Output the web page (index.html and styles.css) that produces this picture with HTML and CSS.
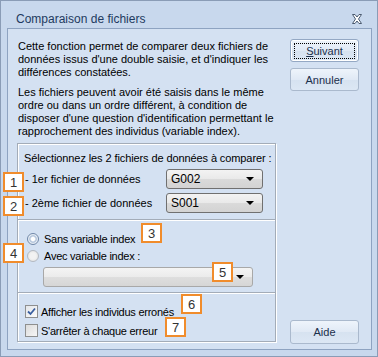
FILE: index.html
```html
<!DOCTYPE html>
<html>
<head>
<meta charset="utf-8">
<link rel="stylesheet" href="styles.css">
</head>
<body>
<div class="window">
  <div class="titlebar">
    <span class="title">Comparaison de fichiers</span>
    <svg class="close" width="12" height="10" viewBox="0 0 12 10">
      <path d="M1.5 0.5 H4 L6 3 L8 0.5 H10.5 L7.5 5 L10.5 9.5 H8 L6 7 L4 9.5 H1.5 L4.5 5 Z" fill="#fff" stroke="#4a5a70" stroke-width="1"/>
    </svg>
  </div>
  <div class="client">
    <div class="leftcol">
      <p class="para">Cette fonction permet de comparer deux fichiers de données issus d'une double saisie, et d'indiquer les différences constatées.</p>
      <p class="para p2">Les fichiers peuvent avoir été saisis dans le même ordre ou dans un ordre différent, à condition de disposer d'une question d'identification permettant le rapprochement des individus (variable index).</p>
      <div class="group">
        <div class="sec sec1">
          <div class="heading">Sélectionnez les 2 fichiers de données à comparer :</div>
          <div class="row">
            <span class="label">- 1er fichier de données</span>
            <div class="combo"><span>G002</span><span class="arrow"></span></div>
          </div>
          <div class="row">
            <span class="label">- 2ème fichier de données</span>
            <div class="combo"><span>S001</span><span class="arrow"></span></div>
          </div>
        </div>
        <div class="sec sec2">
          <div class="opt"><span class="radio on"></span><span class="txt">Sans variable index</span></div>
          <div class="opt"><span class="radio off"></span><span class="txt">Avec variable index :</span></div>
          <div class="combo wide"><span></span><span class="arrow"></span></div>
        </div>
        <div class="sec sec3">
          <div class="opt chk"><span class="box checked"><svg width="9" height="9" viewBox="0 0 9 9"><path d="M1 4.5 L3.5 7 L8 1.5" fill="none" stroke="#3a5fa0" stroke-width="1.8"/></svg></span><span class="txt">Afficher les individus erronés</span></div>
          <div class="opt chk"><span class="box"></span><span class="txt">S'arrêter à chaque erreur</span></div>
        </div>
      </div>
    </div>
    <div class="rightcol">
      <button class="btn default"><span class="focus"><u>S</u>uivant</span></button>
      <button class="btn">Annuler</button>
      <button class="btn aide">Aide</button>
    </div>
  </div>
  <span class="badge b1">1</span>
  <span class="badge b2">2</span>
  <span class="badge b3">3</span>
  <span class="badge b4">4</span>
  <span class="badge b5">5</span>
  <span class="badge b6">6</span>
  <span class="badge b7">7</span>
</div>
</body>
</html>
```
FILE: styles.css
```css
* { box-sizing: border-box; }
html, body { margin: 0; padding: 0; }
body {
  font-family: "Liberation Sans", Arial, sans-serif;
  font-size: 11px;
  color: #000;
  background: #c6d6eb;
}
.window {
  position: relative;
  width: 378px;
  height: 357px;
  border: 1px solid #8a9cb6;
  background: #c8d8ed;
  display: flex;
  flex-direction: column;
}
.titlebar {
  height: 27px;
  display: flex;
  align-items: center;
  justify-content: space-between;
  padding: 0 14px 0 15px;
}
.title {
  font-size: 12px;
  color: #1e3a60;
  padding-top: 8px;
}
.close { margin-top: 8px; }
.client {
  flex: 1;
  margin: 0 5px 6px 6px;
  border: 1px solid #8ea3c1;
  background: #d4e1f2;
  display: flex;
  padding: 11px 11px 5px 9px;
}
.leftcol { width: 259px; display: flex; flex-direction: column; }
.para { margin: 0; padding-left: 1px; line-height: 13px; }
.p2 { margin-top: 7px; }
.group {
  margin-top: 5px;
  border: 1px solid #a3acb8;
  box-shadow: inset 1px 1px 0 #fff, 1px 1px 0 #fff;
  height: 199px;
  display: flex;
  flex-direction: column;
}
.sec { padding-left: 6px; }
.sec1 { height: 76px; padding-top: 8px; border-bottom: 1px solid #a3acb8; }
.sec2 { height: 73px; padding-top: 9px; border-top: 1px solid #fff; border-bottom: 1px solid #a3acb8; padding-left: 9px; }
.sec3 { flex: 1; padding-top: 8px; border-top: 1px solid #fff; padding-left: 7px; }
.heading { line-height: 13px; height: 13px; margin-bottom: 4px; white-space: nowrap; letter-spacing: -0.1px; }
.row { display: flex; align-items: center; height: 20px; margin-bottom: 4px; }
.label { width: 142px; padding-left: 1px; }
.combo {
  width: 97px;
  height: 20px;
  border: 1px solid #707070;
  border-radius: 3px;
  background: linear-gradient(#f3f3f3, #e9e9e9 50%, #dadada 51%, #d3d3d3);
  display: flex;
  align-items: center;
  justify-content: space-between;
  padding: 0 8px 0 4px;
  font-size: 12px;
}
.arrow {
  width: 0; height: 0;
  border-left: 4px solid transparent;
  border-right: 4px solid transparent;
  border-top: 4px solid #000;
}
.opt { display: flex; align-items: center; height: 17px; }
.txt { letter-spacing: -0.25px; white-space: nowrap; }
.radio {
  width: 12px; height: 12px;
  border-radius: 50%;
  border: 1px solid #8d9aab;
  background: radial-gradient(circle, #eef1f5 40%, #d7dde5 100%);
  margin-right: 5px;
  position: relative;
}
.radio.on { border-color: #6f87a8; background: radial-gradient(circle, #fff 25%, #a8bcd6 45%, #e4ebf3 60%, #f5f7fa 100%); }
.radio.off { border-color: #b3b9c1; background: radial-gradient(circle, #f2f2f2 40%, #dcdcdc 100%); }
.combo.wide {
  width: 210px;
  margin-left: 16px;
  margin-top: 3px;
  border-color: #a8a8a8;
  background: linear-gradient(#f4f4f4, #ebebeb 50%, #dedede 51%, #d6d6d6);
}
.chk { height: 19px; }
.box {
  width: 13px; height: 13px;
  border: 1px solid #8e8f8f;
  background: linear-gradient(135deg, #dcdcdc, #f6f6f6);
  margin-right: 3px;
  display: flex; align-items: center; justify-content: center;
}
.box.checked { background: linear-gradient(135deg, #e3e6ea, #fbfbfb); }
.rightcol {
  flex: 1;
  display: flex;
  flex-direction: column;
  align-items: flex-start;
  padding-left: 14px;
}
.btn {
  width: 69px;
  height: 23px;
  border: 1px solid #aab9cd;
  border-radius: 3px;
  background: linear-gradient(#eef4fb, #e0e9f5 50%, #d6e2f0 51%, #dce7f4);
  font-family: "Liberation Sans", Arial, sans-serif;
  font-size: 11px;
  color: #1b2f4b;
  padding: 0;
  display: flex; align-items: center; justify-content: center;
}
.btn.default { margin-top: -1px; border-color: #94a8c4; box-shadow: inset 0 0 0 1px #fff; }
.focus { border: 1px dotted #000; width: 61px; height: 16px; display: flex; align-items: center; justify-content: center; }
.btn + .btn { margin-top: 6px; }
.btn.aide { margin-top: auto; height: 24px; }
.badge {
  position: absolute;
  width: 21px;
  height: 20px;
  border: 2px solid #f08c2c;
  background: #fff;
  font-size: 13px;
  color: #333;
  display: flex; align-items: center; justify-content: center;
}
.b1 { left: 2px; top: 171px; }
.b2 { left: 2px; top: 195px; }
.b3 { left: 140px; top: 222px; }
.b4 { left: 2px; top: 242px; }
.b5 { left: 211px; top: 261px; }
.b6 { left: 180px; top: 293px; }
.b7 { left: 164px; top: 316px; }
```
